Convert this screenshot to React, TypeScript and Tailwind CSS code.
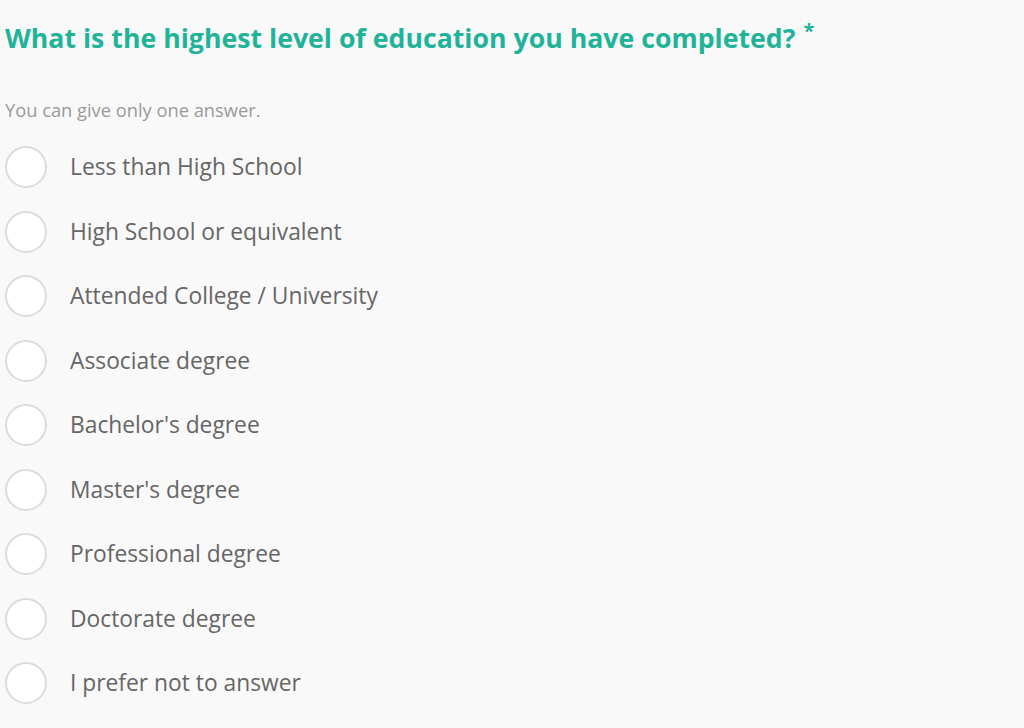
import { useState } from 'react';

const options = [
  'Less than High School',
  'High School or equivalent',
  'Attended College / University',
  'Associate degree',
  "Bachelor's degree",
  "Master's degree",
  'Professional degree',
  'Doctorate degree',
  'I prefer not to answer',
];

export default function App() {
  const [selected, setSelected] = useState<number | null>(null);

  return (
    <div className="min-h-screen w-full bg-[#f9f9f9] pl-[5px] pt-[20px]" style={{ fontFamily: '"Open Sans", sans-serif' }}>
      <h1 className="text-[26.7px] leading-[36px] font-bold text-[#1fb399]">
        What is the highest level of education you have completed?
        <span className="relative -top-[10px] ml-[8px] text-[20px]">*</span>
      </h1>
      <p className="mt-[38px] text-[18.3px] leading-[26px] text-[#9a9a9a]">You can give only one answer.</p>
      <div className="mt-[12px] flex flex-col">
        {options.map((opt, i) => (
          <label key={opt} className="flex h-[64.5px] cursor-pointer items-center" onClick={() => setSelected(i)}>
            <span
              className={`h-[42px] w-[42px] shrink-0 rounded-full border-2 bg-white ${
                selected === i ? 'border-[#1fb399]' : 'border-[#dcdcdc]'
              }`}
            />
            <span className="ml-[23px] text-[22.8px] leading-[30px] text-[#666]">{opt}</span>
          </label>
        ))}
      </div>
    </div>
  );
}
